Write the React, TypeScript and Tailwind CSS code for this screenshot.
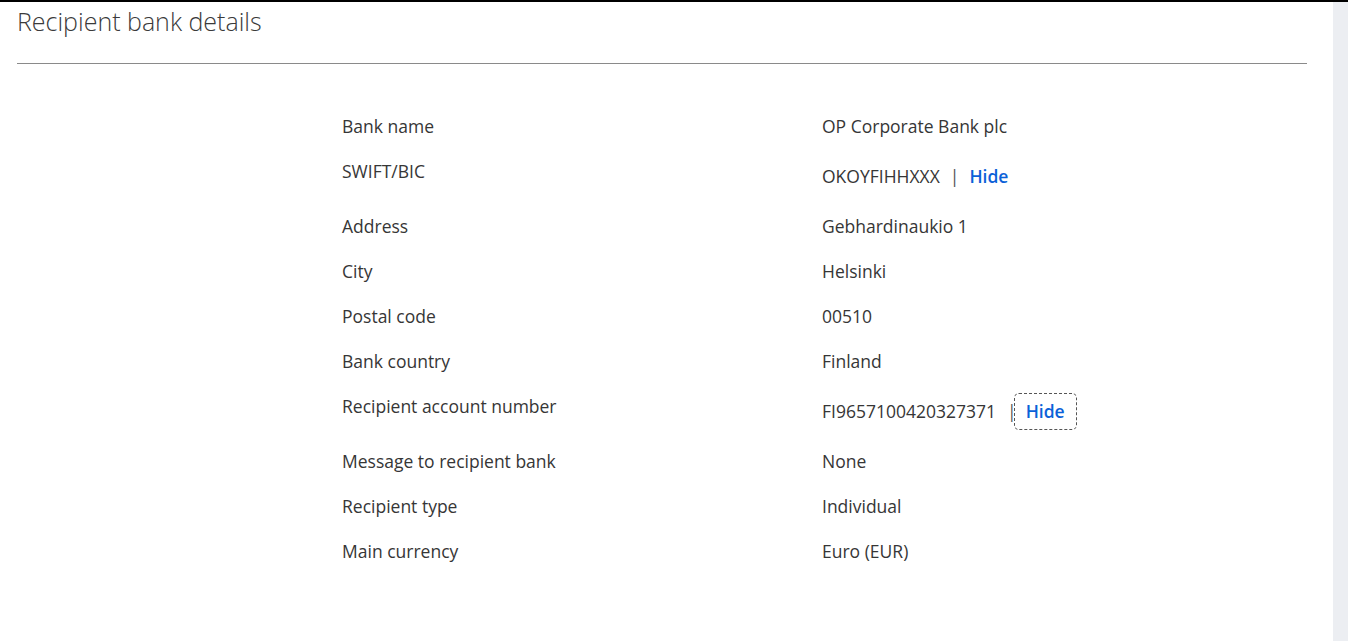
import React from 'react'

const FONT = { fontFamily: '"Open Sans", "Noto Sans", sans-serif' }

type Row = { label: string; value: string; hide?: boolean; focused?: boolean }

const ROWS: Row[] = [
  { label: 'Bank name', value: 'OP Corporate Bank plc' },
  { label: 'SWIFT/BIC', value: 'OKOYFIHHXXX', hide: true },
  { label: 'Address', value: 'Gebhardinaukio 1' },
  { label: 'City', value: 'Helsinki' },
  { label: 'Postal code', value: '00510' },
  { label: 'Bank country', value: 'Finland' },
  { label: 'Recipient account number', value: 'FI9657100420327371', hide: true, focused: true },
  { label: 'Message to recipient bank', value: 'None' },
  { label: 'Recipient type', value: 'Individual' },
  { label: 'Main currency', value: 'Euro (EUR)' },
]

export default function App() {
  return (
    <div className="w-[1348px] h-[641px] bg-white flex overflow-hidden border-t-2 border-black" style={FONT}>
      <div className="flex-1 pl-[17px] pr-[26px]">
        {/* Header */}
        <h1 className="text-[25px] font-light text-[#3a3a3a] leading-[34px] pt-[2px] pb-[25px]">
          Recipient bank details
        </h1>
        <div className="h-px bg-[#8a8a8a]" />

        {/* Details */}
        <div className="pl-[325px] pt-[40px] text-[17.5px] text-[#363636] leading-[25px]">
          {ROWS.map(r => (
            <div key={r.label} className="flex py-[10px]">
              <div className="w-[480px]">{r.label}</div>
              {r.hide ? (
                <div className="flex items-center h-[35px]">
                  <span>{r.value}</span>
                  <span className={`text-[#555] ${r.focused ? 'ml-[11px]' : 'ml-[10px]'}`}>|</span>
                  <button
                    className={`font-semibold text-[#0b61d8] rounded-[5px] ${
                      r.focused
                        ? 'h-[37px] -my-px px-[11px] border border-dashed border-[#555] ml-[-3px]'
                        : 'h-[35px] px-[9px] border border-transparent'
                    }`}
                  >
                    Hide
                  </button>
                </div>
              ) : (
                <div>{r.value}</div>
              )}
            </div>
          ))}
        </div>
      </div>
      <div className="w-[15px] h-full bg-[#eceef2]" />
    </div>
  )
}
